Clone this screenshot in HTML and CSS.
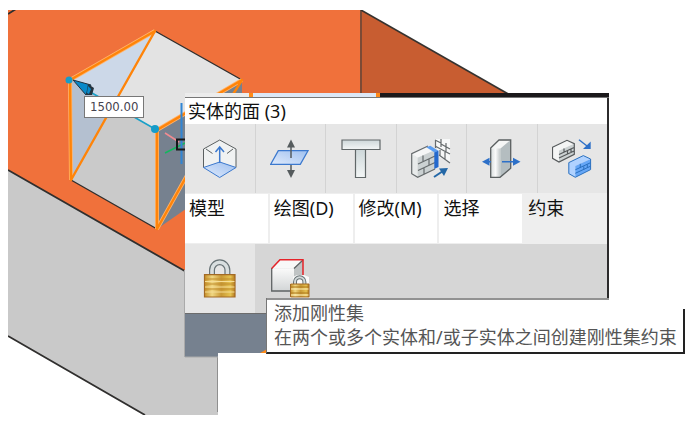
FILE: index.html
```html
<!DOCTYPE html>
<html lang="zh-CN">
<head>
<meta charset="utf-8">
<title>实体的面</title>
<link rel="stylesheet" href="styles.css">
</head>
<body>
<main class="viewport">
  <svg class="scene" width="620" height="415" viewBox="0 0 620 415" aria-hidden="true">
    <defs>
      <clipPath id="view"><path d="M8 10H620V353H218V415H8Z"/></clipPath>
    </defs>
    <g clip-path="url(#view)">
      <path fill="#f0713b" d="M8 10H361V100H185V272L8 170Z"/>
      <path fill="#c85d31" d="M361 10L506 93V97H361Z"/>
      <path d="M361 10V97" stroke="#7c4a35" stroke-width="2"/>
      <path d="M361 10L510 95" stroke="#35322f" stroke-width="1.6"/>
      <path fill="#c9c9c9" d="M8 170L185 271L218 290V415H145L8 336Z"/>
      <path d="M8 170L190 274M8 336L145 415M8 14L16 9" stroke="#302f2e" stroke-width="1.8"/>
      <path d="M217.500 356V412" stroke="#8f8f8f"/>
      <path fill="#76818f" d="M157 130L242 80V170L157 229ZM185 312H268V353H218V357H185Z"/>
      <path d="M184.500 270V357M185 357H218" stroke="#aaa"/>
      <path d="M258 356L270 349" stroke="#ff8a18" stroke-width="3"/>
      <path fill="#ccd8e8" d="M70 80L155 31L113 105Z"/>
      <path fill="#b4c0d0" d="M70 80L113 105L71 180Z"/>
      <path fill="#e3e3e3" d="M155 31L242 80L157 130L113 105Z"/>
      <path fill="#cacaca" d="M113 105L157 130V229L71 180Z"/>
      <path d="M155 31L242 80M71 180L157 229" stroke="#302f2e" stroke-width="1.4"/>
      <g fill="none" stroke-linejoin="round">
        <path stroke="#ffb36b" stroke-width="4" d="M70 80L155 31M70 80L71 180M157 229V130L242 80M157 229L190 170"/>
        <path stroke="#ff8409" stroke-width="2.400" d="M71 180L70 80L155 31L71 180L155 31M190 170L157 229V130L242 80L232 96"/>
      </g>
      <path d="M85 89L155 129" stroke="#18a0c8" stroke-width="1.5"/>
      <circle cx="69" cy="80" r="3.500" fill="#169cc9"/><circle cx="155" cy="129" r="4" fill="#169cc9"/>
      <path fill="#0989c9" stroke="#23323e" d="M73 80L91 85L86 95Z"/>
      <path fill="#23323e" d="M88 84L94 88L92 95L86 95Z"/><path fill="#0989c9" d="M88 86L91 89L89 94L87 93Z"/>
      <path d="M165 133L179 142" stroke="#f28b91" stroke-width="1.500"/>
      <path d="M165 153L185 143" stroke="#12b85e" stroke-width="1.500"/>
      <path d="M181.500 103V164" stroke="#3186d5" stroke-width="2"/>
      <path d="M187 139.500H177V149.500H187" fill="none" stroke="#161719" stroke-width="2"/>
    </g>
  </svg>

  <output class="dimension">1500.00</output>

  <section class="quad" aria-label="实体的面">
    <div class="strip"></div>
    <h1 class="title">实体的面 (3)</h1>
    <div class="tools">
      <button type="button" class="tool" aria-label="拉伸"><svg viewBox="0 0 40 40">
        <defs>
          <linearGradient id="blue" x1="1" y1="0" x2="0" y2="1"><stop stop-color="#9fc0ef"/><stop offset="1" stop-color="#e0ebfc"/></linearGradient>
          <linearGradient id="pale" x1="0" y1="0" x2="0" y2="1"><stop stop-color="#cdd7d9"/><stop offset="1" stop-color="#f3f6f6"/></linearGradient>
          <linearGradient id="shade" x1="0" y1="0" x2="0" y2="1"><stop stop-color="#fafafa"/><stop offset="1" stop-color="#d2d5d6"/></linearGradient>
          <linearGradient id="gold" x1="0" y1="0" x2="1" y2="0"><stop stop-color="#c69028"/><stop offset=".25" stop-color="#f0d782"/><stop offset=".55" stop-color="#c99935"/><stop offset=".85" stop-color="#e5c250"/><stop offset="1" stop-color="#b57a1f"/></linearGradient>
          <linearGradient id="steel" x1="0" y1="0" x2="1" y2="0"><stop stop-color="#d8dddd"/><stop offset=".5" stop-color="#fafafa"/><stop offset="1" stop-color="#c0c6c7"/></linearGradient>
        </defs>
        <path fill="#f0f2f2" stroke="#5b6061" d="M3.500 28.500V10L19.700 1L36 10V28.500"/>
        <path fill="url(#blue)" stroke="#3c79ce" d="M3.500 28.500L19.700 38.500L36 28.500L19.700 23Z"/>
        <path fill="none" stroke="#5b6061" d="M6 10L12.500 14.500M33 10L27 14.500"/>
        <path fill="none" stroke="#3c79ce" stroke-width="1.500" d="M19.700 24V8M15.500 13L19.700 8L24 13"/>
      </svg></button>
      <button type="button" class="tool" aria-label="推拉"><svg viewBox="0 0 40 40">
        <path fill="url(#blue)" stroke="#3c79ce" stroke-width="1.300" d="M8.300 11.700H38L30.300 25.300H.7Z"/>
        <path stroke="#555b5d" stroke-width="1.500" d="M21 7V19M21 26V33"/>
        <path fill="#555b5d" d="M21 .5L25 8.500H17ZM21 39L25 31H17Z"/>
      </svg></button>
      <button type="button" class="tool" aria-label="型材"><svg viewBox="0 0 40 40">
        <g fill="url(#pale)" stroke="#606768" stroke-width="1.200"><path d="M14.500 10.500H24.500V38.500H14.500Z"/><path d="M1 1H39V10.500H1Z"/></g>
      </svg></button>
      <button type="button" class="tool" aria-label="墙体连接"><svg viewBox="0 0 40 40">
        <path fill="#f7f8f8" d="M24 0H39V24L28 18Z"/>
        <path fill="none" stroke="#666b6d" stroke-width="1.200" d="M24.500 1V9M24 1L30 4M30 0V8M24 7L39 15M35 4V13M30 5L39 10M28 16L39 24M34 13V20M29 11V17"/>
        <path fill="#f5f6f6" d="M.7 14.700L17.300 6.700L24 11L6.700 18.700Z"/>
        <path fill="#e8ebeb" d="M.7 14.700L6.700 18.700V38.300L.7 34.700Z"/>
        <path fill="#cbd1d2" d="M6.700 18.700L24 11V30L6.700 38.300Z"/>
        <path fill="none" stroke="#666b6d" stroke-width="1.200" d="M17 7L.7 14.700V34.700L6.700 38.300L24 30M7 25L24 17M7 31.500L24 23.500M12 16.500V22.500M18 20V26M13 29V35"/>
        <path fill="#5b9df0" d="M15.300 8.300L19.300 6.700L27.300 11.700L23.700 13.500Z"/><path fill="#2469cd" d="M23.300 13.500L27.500 11.500V28L23.300 30Z"/>
        <path stroke="#2468a7" stroke-width="2" d="M23 38L32 32"/><path fill="#2468a7" d="M28 29.500L37 29L33 37Z"/>
      </svg></button>
      <button type="button" class="tool" aria-label="厚度"><svg viewBox="0 0 40 40">
        <path fill="#f5f6f6" d="M8.700 9L17 1H28.700L18.500 9.500V38.300H8.700Z"/>
        <path fill="url(#steel)" d="M8.700 9.500H18.500V38.300H8.700Z"/>
        <path fill="#b4bdc0" d="M18.500 9.500L28.700 1V29.300L18.500 38Z"/>
        <path fill="none" stroke="#5b6061" stroke-width="1.300" d="M8.700 9L17 1H28.700V29.300L18 38.300H8.700Z"/>
        <path stroke="#2d70c8" stroke-width="1.400" d="M5 22.700H9M20 22.700H34"/>
        <path fill="#2d70c8" d="M0 22.700L7.500 18.700V26.700ZM38.500 22.700L31 18.700V26.700Z"/>
      </svg></button>
      <button type="button" class="tool" aria-label="复制"><svg viewBox="0 0 40 40">
        <path fill="#f4f5f5" d="M.5 8.300L15 1.300L22.300 4.700L7 11.700V23L.5 19.300Z"/>
        <path fill="#cbd1d2" d="M7 11.700L22.300 4.700V15.300L7 23Z"/>
        <path fill="none" stroke="#55595b" stroke-width="1.200" d="M.5 8.300L15 1.300L22.300 4.700V15.300L7 23L.5 19.300ZM7 15.500L22 8.500M7 19L22 12M12 9.500V13.500M15.500 12V15.500M19 10V13.500"/>
        <g transform="translate(16.300 15.300)"><path fill="#b0d2ff" d="M.5 8.300L15 1.300L22.300 4.700L7 11.700V23L.5 19.300Z"/>
        <path fill="#65a6f6" d="M7 11.700L22.300 4.700V15.300L7 23Z"/>
        <path fill="none" stroke="#2a70bf" d="M.5 8.300L15 1.300L22.300 4.700V15.300L7 23L.5 19.300ZM7 15.500L22 8.500M7 19L22 12M12 9.500V13.500M15.500 12V15.500M19 10V13.500"/></g>
        <path stroke="#2d70c8" stroke-width="1.400" d="M27 .7L35 7"/><path fill="#2d70c8" d="M38.700 2.500V10H31Z"/>
      </svg></button>
    </div>
    <nav class="tabs">
      <button type="button" class="tab">模型</button>
      <button type="button" class="tab">绘图(D)</button>
      <button type="button" class="tab">修改(M)</button>
      <button type="button" class="tab">选择</button>
      <button type="button" class="tab current">约束</button>
    </nav>
    <div class="commands">
      <button type="button" class="command chosen" aria-label="固定"><svg viewBox="0 0 40 40">
        <path fill="none" stroke="#687376" stroke-width="6" d="M12 17V11A7.700 7.700 0 0 1 27.400 11V17"/>
        <path fill="none" stroke="#d9dfe0" stroke-width="3.600" d="M12 17V11A7.700 7.700 0 0 1 27.400 11V17"/>
        <path fill="url(#gold)" stroke="#a36a25" stroke-width="1.200" d="M4.500 15.700H35V38H4.500Z"/>
        <path stroke="#c08c2c" d="M5 20H34.500M5 25H34.500M5 30H34.500"/>
        <path stroke="#f6dd95" d="M5 22.500H34.500M5 28H34.500M5 33H34.500"/>
      </svg></button>
      <button type="button" class="command" aria-label="添加刚性集" aria-describedby="tip"><svg viewBox="0 0 40 40">
        <path fill="#f8f8f8" d="M1.700 9.500L10 .7H33L24 9.500Z"/><path fill="url(#shade)" d="M1.700 9.500H24V32H1.700Z"/><path fill="#bfc3c4" d="M24 9.500L33 .7V23L24 32Z"/>
        <path fill="none" stroke="#5f6364" stroke-width="1.300" d="M1.700 9V32H24M24 9.500L33 1"/>
        <path fill="none" stroke="#e52329" stroke-width="1.500" d="M1.700 9.500L10 .7H33V19"/>
        <path fill="#fafafa" d="M23 18L27 16H34L39 18V39H20V24H23Z"/>
        <path fill="none" stroke="#687376" stroke-width="4" d="M25 26V23A4.700 4.700 0 0 1 34.400 23V26"/>
        <path fill="none" stroke="#d3d9da" stroke-width="2" d="M25 26V23A4.700 4.700 0 0 1 34.400 23V26"/>
        <path fill="url(#gold)" stroke="#a36a25" d="M20.500 25H39V38H20.500Z"/>
        <path stroke="#ad781f" d="M21 28H38.500M21 34H38.500"/><path stroke="#fff2bd" d="M21 30H38.500M21 36H38.500"/>
      </svg></button>
    </div>
  </section>

  <div class="tip" id="tip" role="tooltip">
    <strong class="tip-name">添加刚性集</strong>
    <span class="tip-text">在两个或多个实体和/或子实体之间创建刚性集约束</span>
  </div>
</main>
</body>
</html>
```
FILE: styles.css
```css
* {
  box-sizing: border-box;
}

body {
  margin: 0;
  background: #fff;
  color: #111;
  font-family: "Noto Sans", "Noto Sans CJK SC", sans-serif;
  font-size: 18px;
  line-height: 24px;
}

button {
  margin: 0;
  padding: 0;
  border: 0;
  color: inherit;
  font: inherit;
}

.viewport {
  position: relative;
}

.scene {
  display: block;
}

/* Dimension label pinned to the model */
.dimension {
  position: absolute;
  left: 84px;
  top: 96px;
  padding: 0 5px;
  border: 1px solid #777;
  background: #fff;
  color: #45434f;
  font-family: "DejaVu Sans Condensed", "DejaVu Sans", sans-serif;
  font-size: 13px;
  line-height: 20px;
}

/* Quad menu floating over the model */
.quad {
  position: absolute;
  left: 185px;
  top: 93px;
  width: 424px;
  border-right: 2px solid #2c2b2c;
  border-bottom: 1px solid #6c6c6c;
  background: #d6d6d6;
}

.strip {
  height: 5px;
  margin-right: -2px;
  border-bottom: 1px solid #777;
  background: linear-gradient(90deg, #ececec 15%, #ff8a18 15% 16%, #dce8f7 16% 45%, #ff8a18 45% 46%, #1b191b 46%);
}

.title {
  margin: 0;
  padding: 1px 3px;
  background: #fff;
  font-size: 18px;
  font-weight: 400;
}

.tools {
  display: grid;
  grid-template-columns: repeat(6, 1fr);
  gap: 1px;
  background: #d3d3d3;
}

.tool,
.command {
  display: flex;
  align-items: center;
  justify-content: center;
  height: 69px;
  background: #e6e6e6;
}

.tool svg,
.command svg {
  width: 40px;
  height: 40px;
}

.tabs {
  display: grid;
  grid-template-columns: repeat(5, 1fr);
  gap: 2px;
  padding: 1px 0;
  background: #eee;
}

.tab {
  height: 49px;
  padding: 2px 4px;
  display: flex;
  background: #fff;
}

.tab.current {
  background: #eee;
}

.commands {
  display: flex;
}

.command {
  width: 70px;
  background: #d6d6d6;
}

.command.chosen {
  background: #e6e6e6;
}

/* Tooltip under the hovered command */
.tip {
  position: absolute;
  left: 266px;
  top: 298px;
  width: 419px;
  padding: 3px 7px;
  border-left: 1px solid #777;
  border-bottom: 2px solid #222;
  background: #fff;
  color: #555;
  white-space: nowrap;
}

.tip::before {
  content: "";
  position: absolute;
  left: 0;
  right: 76px;
  top: 0;
  height: 2px;
  background: #929292;
}

.tip::after {
  content: "";
  position: absolute;
  right: 0;
  top: 11px;
  bottom: 0;
  width: 2px;
  background: #222;
}

.tip-name,
.tip-text {
  display: block;
  font-weight: 400;
}
```
